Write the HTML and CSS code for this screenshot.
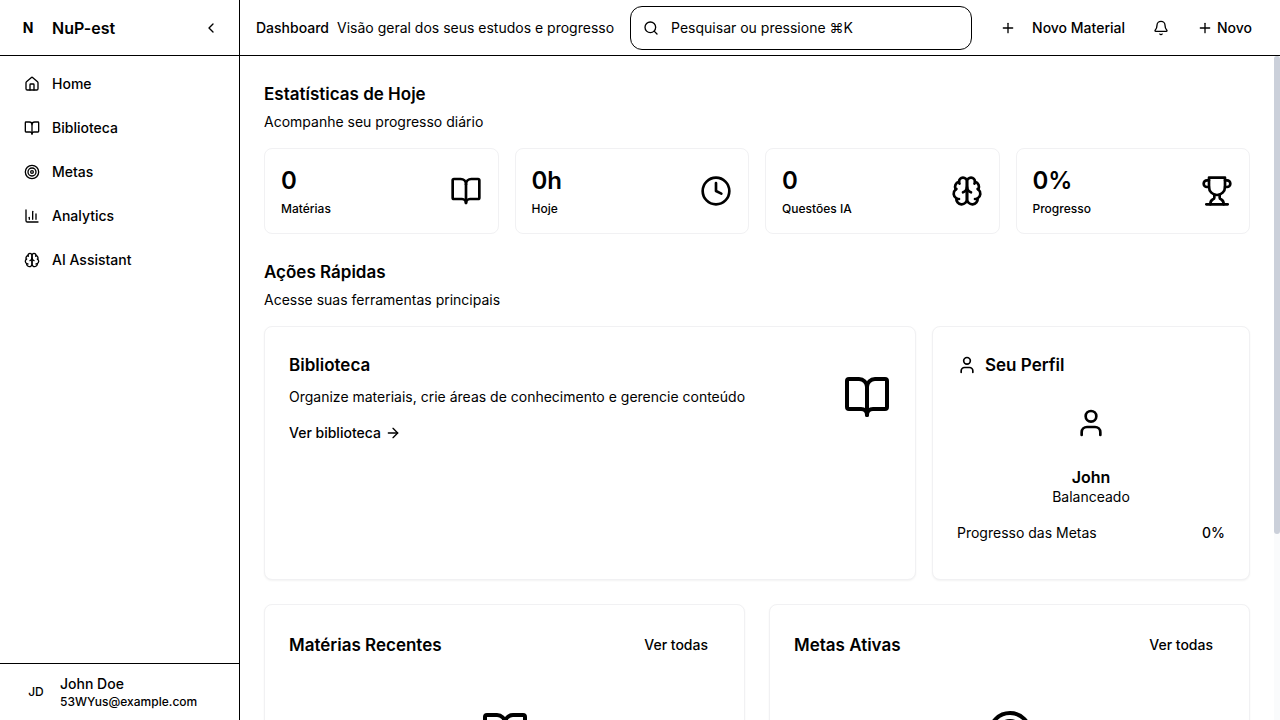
FILE: index.html
```html
<!DOCTYPE html>
<html lang="pt-BR">
<head>
<meta charset="utf-8">
<meta name="viewport" content="width=device-width, initial-scale=1">
<title>NuP-est</title>
<link rel="stylesheet" href="styles.css">
</head>
<body>
<svg class="sprite" aria-hidden="true">
  <symbol id="chevron-left" viewBox="0 0 24 24"><path d="m15 18-6-6 6-6"/></symbol>
  <symbol id="house" viewBox="0 0 24 24"><path d="M15 21v-8a1 1 0 0 0-1-1h-4a1 1 0 0 0-1 1v8"/><path d="M3 10a2 2 0 0 1 .709-1.528l7-6a2 2 0 0 1 2.582 0l7 6A2 2 0 0 1 21 10v9a2 2 0 0 1-2 2H5a2 2 0 0 1-2-2z"/></symbol>
  <symbol id="book" viewBox="0 0 24 24"><path d="M12 7v14"/><path d="M3 18a1 1 0 0 1-1-1V4a1 1 0 0 1 1-1h5a4 4 0 0 1 4 4 4 4 0 0 1 4-4h5a1 1 0 0 1 1 1v13a1 1 0 0 1-1 1h-6a3 3 0 0 0-3 3 3 3 0 0 0-3-3z"/></symbol>
  <symbol id="target" viewBox="0 0 24 24"><circle cx="12" cy="12" r="10"/><circle cx="12" cy="12" r="6"/><circle cx="12" cy="12" r="2"/></symbol>
  <symbol id="chart" viewBox="0 0 24 24"><path d="M3 3v16a2 2 0 0 0 2 2h16"/><path d="M18 17V9"/><path d="M13 17V5"/><path d="M8 17v-3"/></symbol>
  <symbol id="brain" viewBox="0 0 24 24"><path d="M12 5a3 3 0 1 0-5.997.125 4 4 0 0 0-2.526 5.77 4 4 0 0 0 .556 6.588A4 4 0 1 0 12 18Z"/><path d="M12 5a3 3 0 1 1 5.997.125 4 4 0 0 1 2.526 5.77 4 4 0 0 1-.556 6.588A4 4 0 1 1 12 18Z"/><path d="M15 13a4.5 4.5 0 0 1-3-4 4.5 4.5 0 0 1-3 4"/><path d="M17.599 6.5a3 3 0 0 0 .399-1.375"/><path d="M6.003 5.125A3 3 0 0 0 6.401 6.5"/><path d="M3.477 10.896a4 4 0 0 1 .585-.396"/><path d="M19.938 10.5a4 4 0 0 1 .585.396"/><path d="M6 18a4 4 0 0 1-1.967-.516"/><path d="M19.967 17.484A4 4 0 0 1 18 18"/></symbol>
  <symbol id="search" viewBox="0 0 24 24"><circle cx="11" cy="11" r="8"/><path d="m21 21-4.3-4.3"/></symbol>
  <symbol id="plus" viewBox="0 0 24 24"><path d="M5 12h14"/><path d="M12 5v14"/></symbol>
  <symbol id="bell" viewBox="0 0 24 24"><path d="M10.268 21a2 2 0 0 0 3.464 0"/><path d="M3.262 15.326A1 1 0 0 0 4 17h16a1 1 0 0 0 .74-1.673C19.41 13.956 18 12.499 18 8A6 6 0 0 0 6 8c0 4.499-1.411 5.956-2.738 7.326"/></symbol>
  <symbol id="clock" viewBox="0 0 24 24"><circle cx="12" cy="12" r="10"/><path d="M12 6v6l4 2"/></symbol>
  <symbol id="trophy" viewBox="0 0 24 24"><path d="M6 9H4.5a2.5 2.5 0 0 1 0-5H6"/><path d="M18 9h1.5a2.5 2.5 0 0 0 0-5H18"/><path d="M4 22h16"/><path d="M10 14.66V17c0 .55-.47.98-.97 1.21C7.85 18.75 7 20.24 7 22"/><path d="M14 14.66V17c0 .55.47.98.97 1.21C16.15 18.75 17 20.24 17 22"/><path d="M18 2H6v7a6 6 0 0 0 12 0V2Z"/></symbol>
  <symbol id="user" viewBox="0 0 24 24"><path d="M19 21v-2a4 4 0 0 0-4-4H9a4 4 0 0 0-4 4v2"/><circle cx="12" cy="7" r="4"/></symbol>
  <symbol id="arrow-right" viewBox="0 0 24 24"><path d="M5 12h14"/><path d="m12 5 7 7-7 7"/></symbol>
</svg>

<div class="app">
  <aside class="sidebar">
    <div class="brand">
      <span class="brand-mark">N</span>
      <span class="brand-name">NuP-est</span>
      <button class="icon-button" type="button" aria-label="Recolher menu"><svg class="icon"><use href="#chevron-left"/></svg></button>
    </div>
    <nav class="nav">
      <a class="nav-item" href="#"><svg class="icon"><use href="#house"/></svg>Home</a>
      <a class="nav-item" href="#"><svg class="icon"><use href="#book"/></svg>Biblioteca</a>
      <a class="nav-item" href="#"><svg class="icon"><use href="#target"/></svg>Metas</a>
      <a class="nav-item" href="#"><svg class="icon"><use href="#chart"/></svg>Analytics</a>
      <a class="nav-item" href="#"><svg class="icon"><use href="#brain"/></svg>AI Assistant</a>
    </nav>
    <div class="account">
      <span class="avatar">JD</span>
      <div class="account-text">
        <span class="account-name">John Doe</span>
        <span class="account-email">53WYus@example.com</span>
      </div>
    </div>
  </aside>

  <div class="workspace">
    <header class="topbar">
      <div class="crumb">
        <h1 class="page-title">Dashboard</h1>
        <span>Visão geral dos seus estudos e progresso</span>
      </div>
      <label class="search">
        <svg class="icon"><use href="#search"/></svg>
        <input class="search-input" type="text" aria-label="Pesquisar" placeholder="Pesquisar ou pressione ⌘K">
      </label>
      <div class="actions">
        <button class="button button-wide" type="button"><svg class="icon"><use href="#plus"/></svg>Novo Material</button>
        <button class="icon-button" type="button" aria-label="Notificações"><svg class="icon"><use href="#bell"/></svg></button>
        <button class="button" type="button"><svg class="icon"><use href="#plus"/></svg>Novo</button>
      </div>
    </header>

    <div class="scroll-area">
      <main class="content">
        <section class="section">
          <div class="section-head">
            <h2 class="heading">Estatísticas de Hoje</h2>
            <p>Acompanhe seu progresso diário</p>
          </div>
          <div class="stats">
            <div class="card stat">
              <div class="stat-text"><span class="stat-value">0</span><span class="stat-label">Matérias</span></div>
              <svg class="icon icon-lg"><use href="#book"/></svg>
            </div>
            <div class="card stat">
              <div class="stat-text"><span class="stat-value">0h</span><span class="stat-label">Hoje</span></div>
              <svg class="icon icon-lg"><use href="#clock"/></svg>
            </div>
            <div class="card stat">
              <div class="stat-text"><span class="stat-value">0</span><span class="stat-label">Questões IA</span></div>
              <svg class="icon icon-lg"><use href="#brain"/></svg>
            </div>
            <div class="card stat">
              <div class="stat-text"><span class="stat-value">0%</span><span class="stat-label">Progresso</span></div>
              <svg class="icon icon-lg"><use href="#trophy"/></svg>
            </div>
          </div>
        </section>

        <section class="section">
          <div class="section-head">
            <h2 class="heading">Ações Rápidas</h2>
            <p>Acesse suas ferramentas principais</p>
          </div>
          <div class="quick">
            <article class="card panel library">
              <div class="library-text">
                <h3 class="heading">Biblioteca</h3>
                <p>Organize materiais, crie áreas de conhecimento e gerencie conteúdo</p>
                <a class="more" href="#">Ver biblioteca<svg class="icon"><use href="#arrow-right"/></svg></a>
              </div>
              <svg class="icon icon-xl"><use href="#book"/></svg>
            </article>
            <article class="card panel">
              <h3 class="heading profile-title"><svg class="icon icon-md"><use href="#user"/></svg>Seu Perfil</h3>
              <div class="profile">
                <span class="profile-avatar"><svg class="icon icon-lg"><use href="#user"/></svg></span>
                <h4 class="profile-name">John</h4>
                <span>Balanceado</span>
              </div>
              <div class="goal"><span>Progresso das Metas</span><span class="goal-value">0%</span></div>
            </article>
          </div>
        </section>

        <section class="lists">
          <article class="card panel">
            <div class="list-head"><h3 class="heading">Matérias Recentes</h3><button class="button" type="button">Ver todas</button></div>
            <div class="empty"><svg class="icon icon-xl"><use href="#book"/></svg></div>
          </article>
          <article class="card panel">
            <div class="list-head"><h3 class="heading">Metas Ativas</h3><button class="button" type="button">Ver todas</button></div>
            <div class="empty"><svg class="icon icon-xl"><use href="#target"/></svg></div>
          </article>
        </section>
      </main>
      <div class="scroll-track" aria-hidden="true"><div class="scroll-thumb"></div></div>
    </div>
  </div>
</div>
</body>
</html>
```
FILE: styles.css
```css
* {
  box-sizing: border-box;
  margin: 0;
}

body {
  background: #fff;
  color: #000;
  font: 400 14px/20px Inter, "Liberation Sans", sans-serif;
}

a {
  color: inherit;
  text-decoration: none;
}

button,
input {
  border: 0;
  background: none;
  color: inherit;
  font: inherit;
}

button {
  cursor: pointer;
}

.sprite {
  display: none;
}

.icon {
  flex: none;
  width: 16px;
  height: 16px;
  fill: none;
  stroke: currentColor;
  stroke-width: 2;
  stroke-linecap: round;
  stroke-linejoin: round;
}

.icon-md {
  width: 20px;
  height: 20px;
}

.icon-lg {
  width: 32px;
  height: 32px;
}

.icon-xl {
  width: 48px;
  height: 48px;
}

.app {
  display: flex;
  height: 100vh;
}

/* Sidebar */

.sidebar {
  display: flex;
  flex: none;
  flex-direction: column;
  width: 240px;
  border-right: 1px solid #000;
}

.brand {
  display: flex;
  align-items: center;
  gap: 12px;
  height: 56px;
  padding: 0 12px 0 16px;
  border-bottom: 1px solid #000;
}

.brand-mark {
  width: 24px;
  font-weight: 700;
  text-align: center;
}

.brand-name {
  flex: 1;
  font-size: 16px;
  font-weight: 600;
}

.nav {
  display: flex;
  flex: 1;
  flex-direction: column;
  gap: 4px;
  padding: 8px 12px;
}

.nav-item {
  display: flex;
  align-items: center;
  gap: 12px;
  height: 40px;
  padding: 0 12px;
  font-weight: 500;
}

.account {
  display: flex;
  align-items: center;
  gap: 8px;
  padding: 10px 20px;
  border-top: 1px solid #000;
}

.avatar {
  width: 32px;
  font-size: 12px;
  font-weight: 500;
  text-align: center;
}

.account-text {
  display: flex;
  flex-direction: column;
  font-weight: 500;
}

.account-email {
  font-size: 12px;
  line-height: 16px;
}

/* Top bar */

.workspace {
  display: flex;
  flex: 1;
  flex-direction: column;
  min-width: 0;
}

.topbar {
  display: flex;
  flex: none;
  align-items: center;
  gap: 16px;
  height: 56px;
  padding: 0 16px;
  border-bottom: 1px solid #000;
}

.crumb {
  display: flex;
  flex: none;
  gap: 8px;
}

.page-title {
  font-size: 14px;
  font-weight: 500;
}

.search {
  display: flex;
  flex: 1;
  align-items: center;
  gap: 12px;
  min-width: 0;
  height: 44px;
  padding: 0 12px;
  border: 1px solid #000;
  border-radius: 12px;
}

.search-input {
  flex: 1;
  min-width: 0;
  padding: 0;
  outline: 0;
}

.search-input::placeholder {
  color: #000;
  opacity: 1;
}

.actions {
  display: flex;
  flex: none;
  gap: 8px;
}

.button {
  display: flex;
  align-items: center;
  gap: 4px;
  height: 32px;
  padding: 0 12px;
  font-weight: 500;
}

.button-wide {
  gap: 16px;
}

.icon-button {
  display: grid;
  place-items: center;
  width: 32px;
  height: 32px;
  padding: 0;
}

/* Dashboard */

.scroll-area {
  display: flex;
  flex: 1;
  min-height: 0;
}

.content {
  display: flex;
  flex: 1;
  flex-direction: column;
  gap: 24px;
  min-width: 0;
  padding: 24px;
  overflow-y: auto;
  scrollbar-width: none;
}

.scroll-track {
  flex: none;
  width: 6px;
  background: #fafbfc;
}

.scroll-thumb {
  height: 72%;
  border-radius: 3px;
  background: #cbd0da;
}

.section {
  display: flex;
  flex: none;
  flex-direction: column;
  gap: 16px;
}

.section-head {
  display: flex;
  flex-direction: column;
  gap: 4px;
}

.heading {
  font-size: 17px;
  font-weight: 600;
  line-height: 28px;
}

.card {
  border: 1px solid #f1f1f3;
  border-radius: 8px;
  background: #fff;
}

.panel {
  padding: 24px;
  box-shadow: 0 1px 2px rgb(0 0 0 / 5%);
}

.stats {
  display: grid;
  grid-template-columns: repeat(4, 1fr);
  gap: 16px;
}

.stat {
  display: flex;
  align-items: center;
  justify-content: space-between;
  padding: 16px;
}

.stat-text {
  display: flex;
  flex-direction: column;
  gap: 4px;
}

.stat-value {
  font-size: 24px;
  font-weight: 600;
  line-height: 32px;
}

.stat-label {
  font-size: 12px;
  font-weight: 500;
  line-height: 16px;
}

.quick {
  display: grid;
  grid-template-columns: repeat(3, 1fr);
  gap: 16px;
}

.library {
  display: flex;
  grid-column: span 2;
  align-items: flex-start;
  justify-content: space-between;
}

.library .icon-xl {
  margin-top: 22px;
}

.library-text {
  display: flex;
  flex-direction: column;
  gap: 8px;
}

.more {
  display: flex;
  align-items: center;
  gap: 4px;
  padding-top: 8px;
  font-weight: 500;
}

.profile-title {
  display: flex;
  align-items: center;
  gap: 8px;
}

.profile {
  display: flex;
  flex-direction: column;
  align-items: center;
  padding: 12px 0 16px;
}

.profile-avatar {
  display: grid;
  place-items: center;
  width: 64px;
  height: 64px;
  margin-bottom: 12px;
}

.profile-name {
  font-size: 16px;
  font-weight: 600;
}

.goal {
  display: flex;
  justify-content: space-between;
  padding-bottom: 12px;
}

.goal-value {
  font-weight: 500;
}

.lists {
  display: grid;
  flex: none;
  grid-template-columns: repeat(2, 1fr);
  gap: 24px;
}

.list-head {
  display: flex;
  align-items: center;
  justify-content: space-between;
}

.empty {
  display: flex;
  justify-content: center;
  padding: 48px 0 168px;
}
```
